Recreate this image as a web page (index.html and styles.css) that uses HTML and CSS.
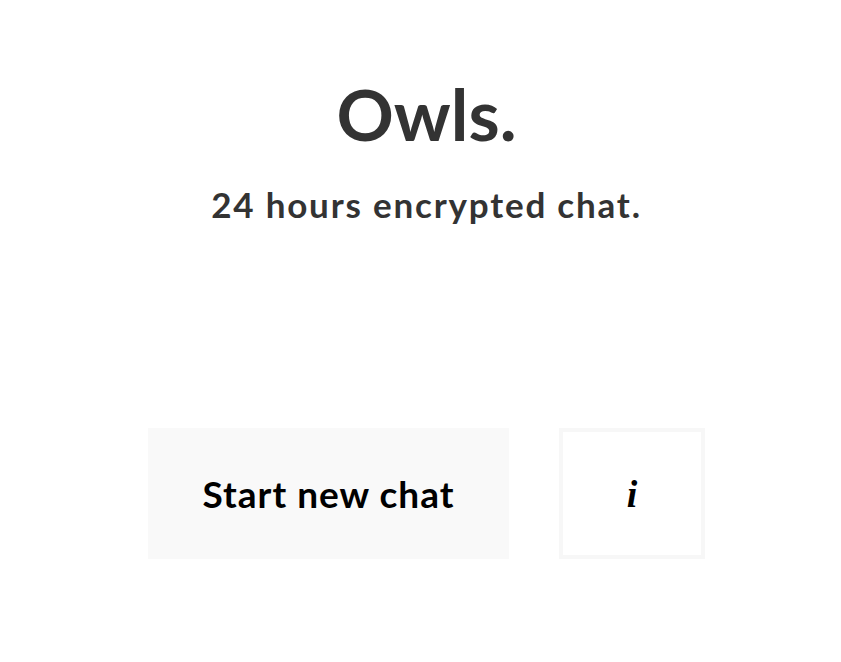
FILE: index.html
```html
<!DOCTYPE html>
<html lang="en">
<head>
    <meta charset="UTF-8">
    <meta name="viewport" content="width=device-width, initial-scale=1.0">
    <title>Owls.</title>
    <link rel="stylesheet" href="styles.css">
</head>
<body>

    <div class="intro">
        <h1>Owls.</h1>
        <h2>24 hours encrypted chat.</h2>
    </div>

    <div class="actions">
        <button class="start-btn">Start new chat</button>
        <button class="info-btn">i</button>
    </div>

</body>
</html>
```

FILE: styles.css
```css
body {
    margin: 0;
    padding-left: 12px;
    font-family: Lato, "Liberation Sans", sans-serif;
    text-align: center;
    background-color: #fff;
}
.intro {
    padding-top: 71px;
}
.intro h1 {
    margin: 0;
    font-size: 71px;
    line-height: 86px;
    font-weight: bold;
    color: #333;
}
.intro h2 {
    margin: 26px 0 0;
    font-size: 35px;
    line-height: 42px;
    font-weight: bold;
    letter-spacing: 1.8px;
    color: #333;
}
.actions {
    display: flex;
    justify-content: center;
    gap: 50px;
    margin-top: 203px;
}
.actions button {
    font-family: Lato, "Liberation Sans", sans-serif;
    font-weight: bold;
    color: #000;
    cursor: pointer;
    height: 131px;
}
.start-btn {
    width: 361px;
    background-color: #f9f9f9;
    border: none;
    font-size: 37px;
    letter-spacing: 1px;
}
.info-btn {
    width: 146px;
    background: #fff;
    border: 4px solid #f7f7f7;
    font-family: "Liberation Serif", serif !important;
    font-style: italic;
    font-size: 38px;
}
```
